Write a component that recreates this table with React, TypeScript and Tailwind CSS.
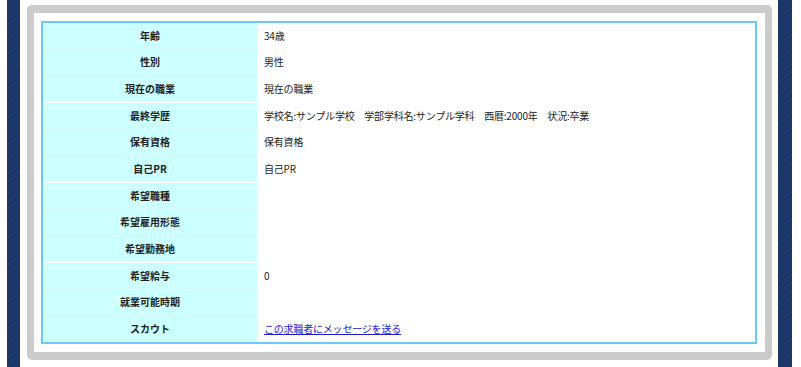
const ROWS: { label: string; value?: string; link?: boolean }[] = [
  { label: '年齢', value: '34歳' },
  { label: '性別', value: '男性' },
  { label: '現在の職業', value: '現在の職業' },
  { label: '最終学歴', value: '学校名:サンプル学校　学部学科名:サンプル学科　西暦:2000年　状況:卒業' },
  { label: '保有資格', value: '保有資格' },
  { label: '自己PR', value: '自己PR' },
  { label: '希望職種' },
  { label: '希望雇用形態' },
  { label: '希望勤務地' },
  { label: '希望給与', value: '0' },
  { label: '就業可能時期' },
  { label: 'スカウト', value: 'この求職者にメッセージを送る', link: true },
];

function Stripe({ className }: { className: string }) {
  return (
    <div
      className={`h-full bg-[repeating-linear-gradient(135deg,#1a3566_0,#1a3566_3px,#1e3b6e_3px,#1e3b6e_5px)] ${className}`}
    />
  );
}

export default function App() {
  return (
    <div
      className="flex h-[367px] w-[801px] bg-white text-[10px] leading-none text-[#222]"
      style={{ fontFamily: '"Noto Sans CJK JP", "Noto Sans", sans-serif' }}
    >
      <Stripe className="ml-[7px] w-[13px]" />

      {/* profile frame */}
      <div className="ml-[7px] mt-[5px] h-[355px] w-[745px] rounded-[5px] border-[8px] border-x-[7px] border-[#cbcbcb] bg-white py-[8px] pl-[7px] pr-[8px]">
        <div className="h-full border-2 border-[#6cc8f8]">
          <div className="grid h-full grid-rows-12 gap-px">
            {ROWS.map((row) => (
              <div key={row.label} className="flex">
                <div className="flex w-[214px] items-center justify-center bg-[#ccffff] font-bold text-[#222]">
                  {row.label}
                </div>
                <div className="ml-px flex flex-1 items-center pl-[6px] tracking-[-0.2px]">
                  {row.link ? (
                    <a href="#" className="text-[#1a1acc] underline">
                      {row.value}
                    </a>
                  ) : (
                    row.value
                  )}
                </div>
              </div>
            ))}
          </div>
        </div>
      </div>

      <Stripe className="ml-[6px] w-[14px]" />
    </div>
  );
}
